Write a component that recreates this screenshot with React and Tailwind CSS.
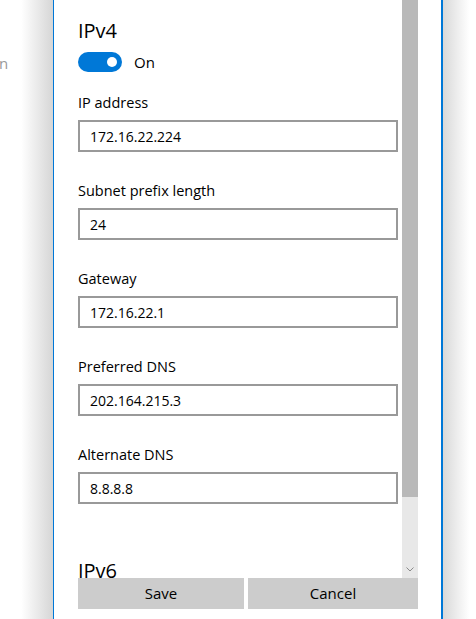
import React from "react";

const fields = [
    { label: "IP address", value: "172.16.22.224" },
    { label: "Subnet prefix length", value: "24" },
    { label: "Gateway", value: "172.16.22.1" },
    { label: "Preferred DNS", value: "202.164.215.3" },
    { label: "Alternate DNS", value: "8.8.8.8" },
];

function Field({ label, value }) {
    return (
        <div className="mb-[29px]">
            <div className="h-5 leading-5 text-[14.5px] text-black mb-[7px]">{label}</div>
            <div className="h-8 w-[320px] border-2 border-[#999999] bg-white flex items-center px-[10px] text-[14px] text-black">
                {value}
            </div>
        </div>
    );
}

export default function App() {
    return (
        <div
            className="w-[476px] h-[619px] overflow-hidden bg-white flex"
            style={{ fontFamily: '"Segoe UI", "Open Sans", sans-serif' }}
        >
            {/* page behind the dialog */}
            <div className="w-[53px] shrink-0 bg-gradient-to-r from-white from-40% to-[#d6d6d6] pt-[53px]">
                <div className="text-[15px] leading-5 text-[#999999] -ml-[1px]">n</div>
            </div>

            {/* dialog */}
            <div className="w-[390px] shrink-0 border-l border-r-2 border-[#0078d7] bg-white flex flex-col">
                <div className="h-[578px] flex gap-1 pl-6 overflow-hidden">
                    <div className="w-[320px] shrink-0 pt-[17px]">
                        <h2 className="text-[20px] leading-7 text-black">IPv4</h2>
                        <div className="flex items-center gap-3 mt-[7px] h-5">
                            <div className="w-11 h-5 rounded-full bg-[#0078d7] flex items-center justify-end pr-[5px]">
                                <div className="w-[10px] h-[10px] rounded-full bg-white" />
                            </div>
                            <span className="text-[15px] text-black">On</span>
                        </div>
                        <div className="mt-[21px]">
                            {fields.map((f) => (
                                <Field key={f.label} label={f.label} value={f.value} />
                            ))}
                        </div>
                        <h2 className="text-[20px] leading-7 text-black mt-[53px]">IPv6</h2>
                    </div>
                    <div className="w-4 shrink-0 flex flex-col">
                        <div className="h-[497px] bg-[#b9b9b9]" />
                        <div className="flex-1 bg-[#e8e8e8] flex items-end justify-center pb-[6px]">
                            <svg width="8" height="5" viewBox="0 0 8 5" fill="none">
                                <path d="M0.5 0.5L4 4L7.5 0.5" stroke="#8a8a8a" strokeWidth="1" />
                            </svg>
                        </div>
                    </div>
                </div>
                <div className="flex gap-1 pl-6 h-[31px]">
                    <button className="w-[166px] h-full bg-[#cccccc] text-[15px] text-black">Save</button>
                    <button className="w-[170px] h-full bg-[#cccccc] text-[15px] text-black">Cancel</button>
                </div>
            </div>

            {/* shadow on the right */}
            <div className="flex-1 bg-gradient-to-r from-[#d9d9d9] to-white to-80%" />
        </div>
    );
}
